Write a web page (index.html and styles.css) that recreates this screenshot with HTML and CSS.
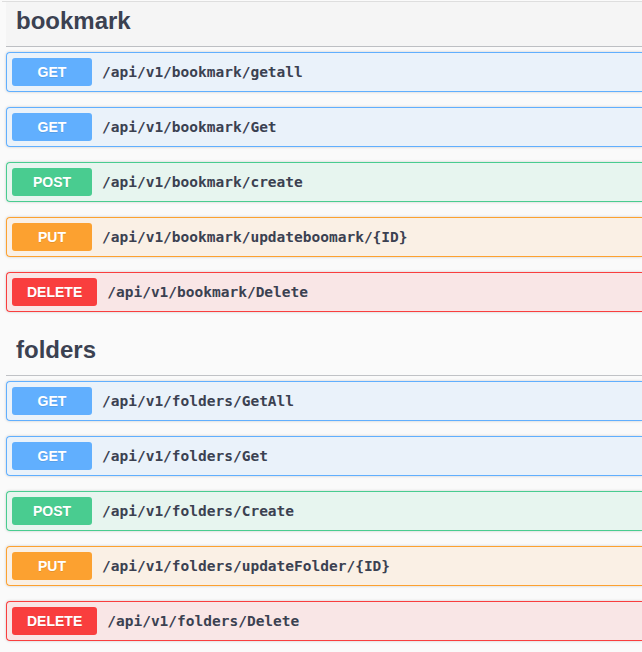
FILE: index.html
```html
<!DOCTYPE html>
<html>
<head>
<meta charset="utf-8">
<link rel="stylesheet" href="styles.css">
</head>
<body>
<div class="wrap">
  <div class="topline"></div>
  <section class="tag-section">
    <h3 class="tag is-hover"><span>bookmark</span></h3>
    <div class="ops">
      <div class="op get"><span class="method">GET</span><span class="path">/api/v1/bookmark/getall</span></div>
      <div class="op get"><span class="method">GET</span><span class="path">/api/v1/bookmark/Get</span></div>
      <div class="op post"><span class="method">POST</span><span class="path">/api/v1/bookmark/create</span></div>
      <div class="op put"><span class="method">PUT</span><span class="path">/api/v1/bookmark/updateboomark/{ID}</span></div>
      <div class="op delete"><span class="method">DELETE</span><span class="path">/api/v1/bookmark/Delete</span></div>
    </div>
  </section>
  <section class="tag-section next">
    <h3 class="tag"><span>folders</span></h3>
    <div class="ops">
      <div class="op get"><span class="method">GET</span><span class="path">/api/v1/folders/GetAll</span></div>
      <div class="op get"><span class="method">GET</span><span class="path">/api/v1/folders/Get</span></div>
      <div class="op post"><span class="method">POST</span><span class="path">/api/v1/folders/Create</span></div>
      <div class="op put"><span class="method">PUT</span><span class="path">/api/v1/folders/updateFolder/{ID}</span></div>
      <div class="op delete"><span class="method">DELETE</span><span class="path">/api/v1/folders/Delete</span></div>
    </div>
  </section>
</div>
</body>
</html>
```
FILE: styles.css
```css
html, body {
  margin: 0;
  padding: 0;
  background: #fafafa;
  overflow: hidden;
}
.wrap {
  padding-left: 6px;
  font-family: "Liberation Sans", Arial, sans-serif;
  color: #3b4151;
}
.topline {
  margin-top: 1px;
  margin-left: -4px;
  border-top: 1px solid #dedede;
}
.tag-section.next {
  margin-top: 19px;
}
.tag {
  margin: 0 0 5px;
  padding: 7px 20px 13px 10px;
  font-size: 24px;
  line-height: 24px;
  font-weight: 700;
  border-bottom: 1px solid rgba(59, 65, 81, 0.3);
}
.tag.is-hover {
  background: rgba(0, 0, 0, 0.02);
}
.op {
  display: flex;
  align-items: center;
  padding: 5px;
  margin-bottom: 15px;
  border: 1px solid #000;
  border-right-width: 0;
  border-radius: 4px 0 0 4px;
  box-shadow: 0 0 3px rgba(0, 0, 0, 0.19);
}
.method {
  box-sizing: border-box;
  min-width: 80px;
  padding: 6px 15px;
  font-size: 14px;
  line-height: 16px;
  font-weight: 700;
  text-align: center;
  color: #fff;
  border-radius: 3px;
  text-shadow: 0 1px 0 rgba(0, 0, 0, 0.1);
}
.path {
  padding: 0 10px;
  font-family: "DejaVu Sans Mono", "Liberation Mono", monospace;
  font-size: 14.5px;
  font-weight: 700;
  color: #3b4151;
  white-space: nowrap;
}
.get { border-color: #61affe; background: rgba(97, 175, 254, 0.1); }
.get .method { background: #61affe; }
.post { border-color: #49cc90; background: rgba(73, 204, 144, 0.1); }
.post .method { background: #49cc90; }
.put { border-color: #fca130; background: rgba(252, 161, 48, 0.1); }
.put .method { background: #fca130; }
.delete { border-color: #f93e3e; background: rgba(249, 62, 62, 0.1); }
.delete .method { background: #f93e3e; }
```
